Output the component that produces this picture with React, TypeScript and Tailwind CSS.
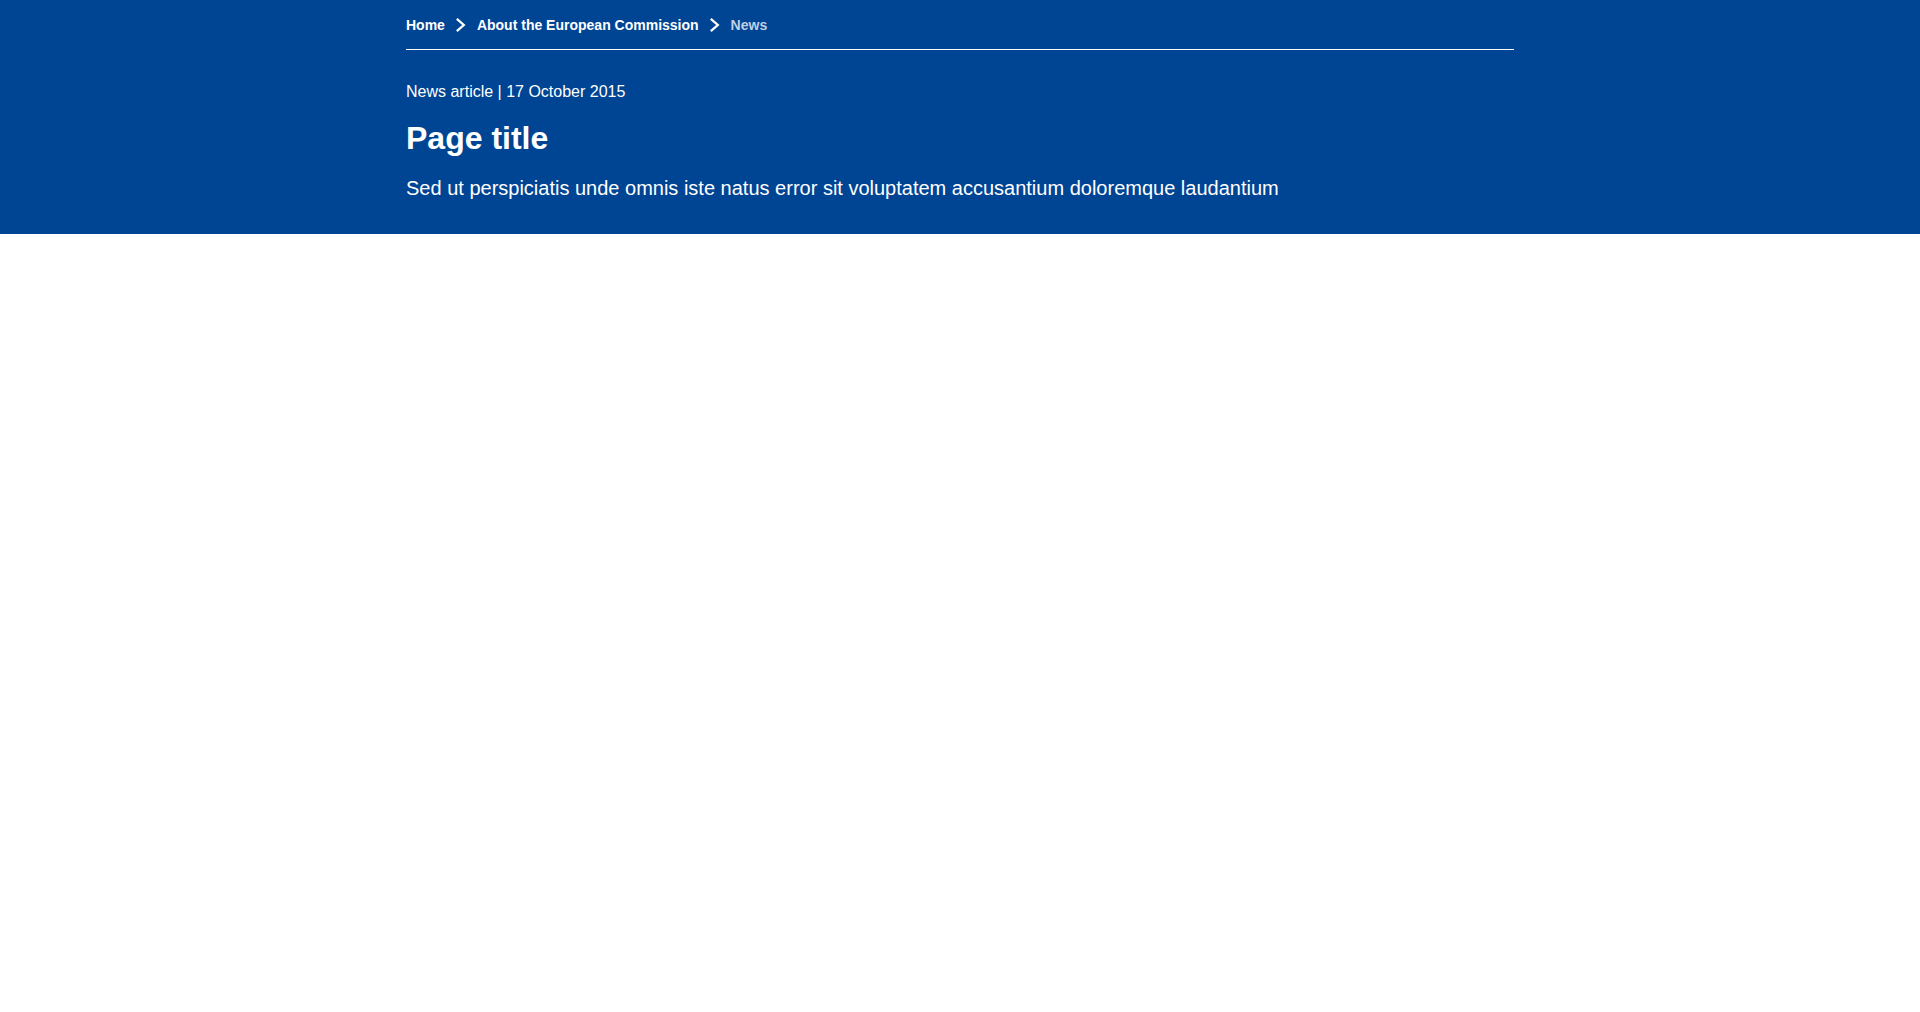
const crumbs = [
  { label: 'Home', href: '#home' },
  { label: 'About the European Commission', href: '#about' },
];

function Chevron() {
  return (
    <svg className="mx-2 size-4 shrink-0" viewBox="0 0 16 16" fill="none" aria-hidden="true">
      <path d="M3.8 1.9 L10.8 8 L3.8 14.1" stroke="white" strokeWidth="2.3" />
    </svg>
  );
}

export default function App() {
  return (
    <div className="min-h-screen bg-white font-['Liberation_Sans',Arial,sans-serif]">
      <header className="bg-[#004494] pb-8 text-white">
        <div className="mx-auto max-w-[1140px] px-4">
          <nav aria-label="Breadcrumb" className="border-b border-white pt-4 pb-[15px]">
            <ol className="flex flex-wrap items-center text-sm leading-[18px] font-bold">
              {crumbs.map((c) => (
                <li key={c.label} className="flex items-center">
                  <a href={c.href} className="hover:underline">{c.label}</a>
                  <Chevron />
                </li>
              ))}
              <li aria-current="page" className="text-[#bfd0e4]">News</li>
            </ol>
          </nav>
          <p className="mt-8 text-base leading-5">News article | 17 October 2015</p>
          <h1 className="mt-4 text-[32px] leading-10 font-bold">Page title</h1>
          <p className="mt-4 text-xl leading-7">
            Sed ut perspiciatis unde omnis iste natus error sit voluptatem accusantium doloremque laudantium
          </p>
        </div>
      </header>
    </div>
  );
}
